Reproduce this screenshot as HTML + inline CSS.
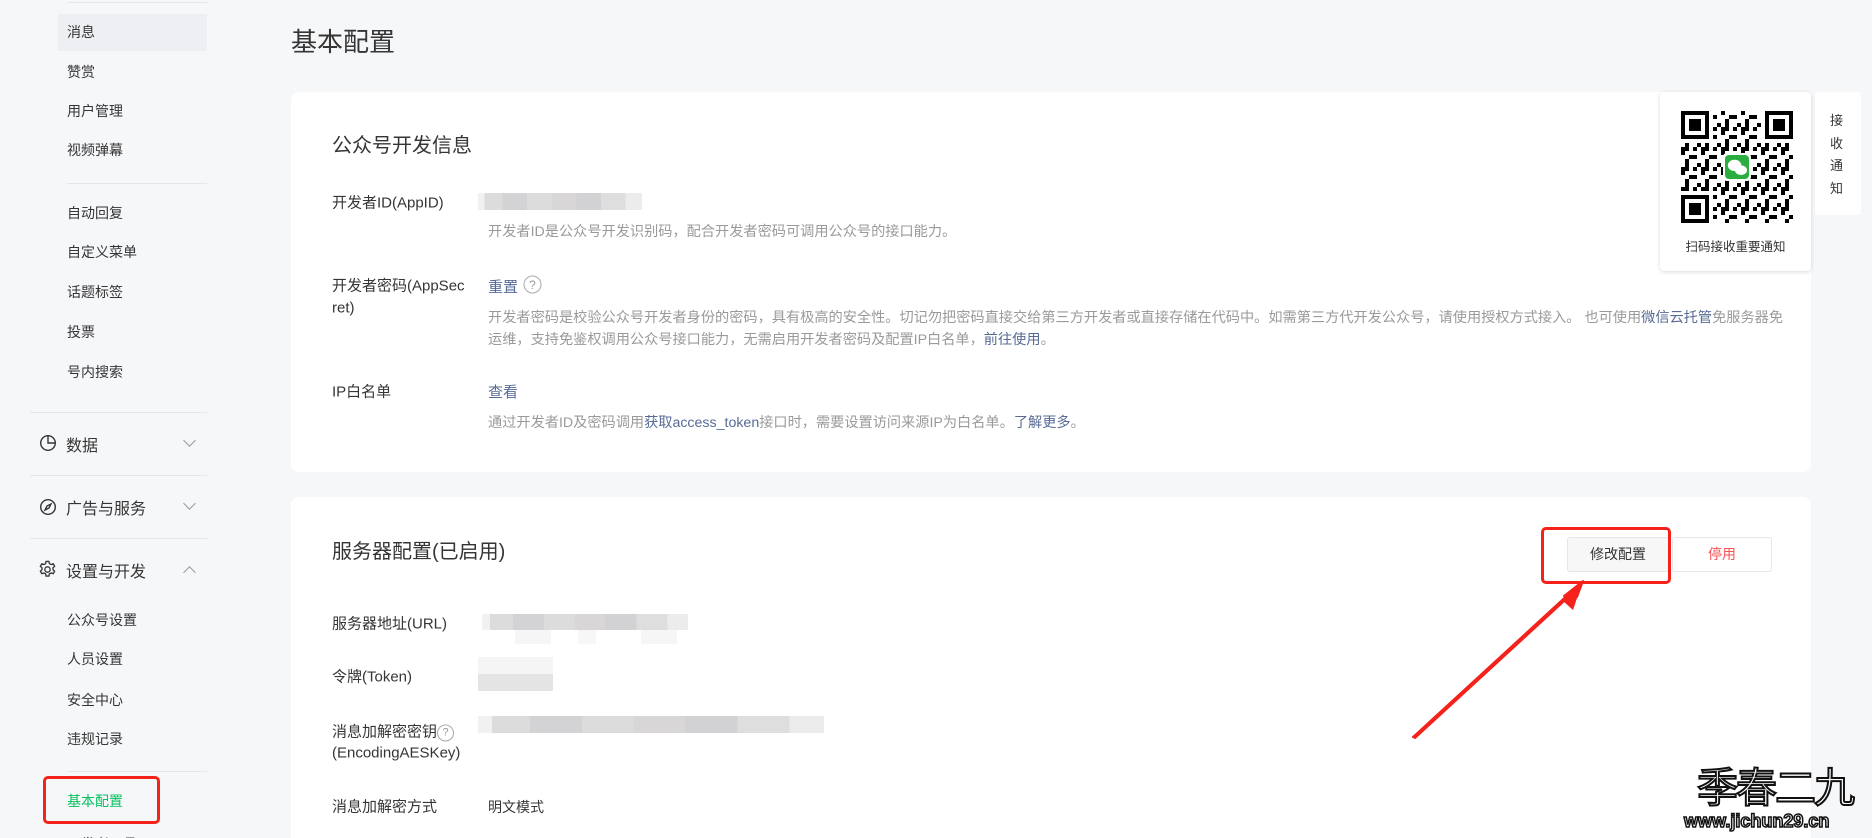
<!DOCTYPE html>
<html style="width:1872px;height:838px;overflow:hidden"><head><meta charset="utf-8">
<style>
*{margin:0;padding:0;box-sizing:border-box}
body{width:1872px;height:838px;overflow:hidden;background:#f6f7f9;font-family:"Liberation Sans","Noto Sans CJK SC",sans-serif;color:#353535;position:relative}
.a{position:absolute;white-space:nowrap}
.si{position:absolute;left:67px;font-size:14px;color:#353535;transform:translateY(-50%)}
.hd{position:absolute;left:48px;font-size:16px;color:#353535;transform:translateY(-50%)}
.dv{position:absolute;height:1px;background:#e4e6eb}
.card{position:absolute;background:#fff;border-radius:8px}
.lb{position:absolute;left:332px;font-size:15px;color:#353535;transform:translateY(-50%)}
.ds{position:absolute;left:488px;font-size:14.2px;color:#9a9a9a;transform:translateY(-50%)}
.lk{color:#576b95}
.blur{position:absolute;background:linear-gradient(90deg,#f1f1f1 0 4%,#dcdcdc 4% 15%,#d3d3d6 15% 30%,#dcdcdc 30% 45%,#d8d6d6 45% 60%,#d2d2d4 60% 75%,#dedede 75% 90%,#ececec 90%)}
.chev{position:absolute;width:9px;height:9px;border-right:1.5px solid #9a9a9a;border-bottom:1.5px solid #9a9a9a}
</style></head><body>

<!-- sidebar -->
<div class="dv" style="left:67px;top:2px;width:140px"></div>
<div class="a" style="left:58px;top:14px;width:149px;height:37px;background:#eeeff2"></div>
<div class="si" style="top:32px">消息</div>
<div class="si" style="top:72px">赞赏</div>
<div class="si" style="top:111px">用户管理</div>
<div class="si" style="top:150px">视频弹幕</div>
<div class="dv" style="left:67px;top:183px;width:140px"></div>
<div class="si" style="top:213px">自动回复</div>
<div class="si" style="top:252px">自定义菜单</div>
<div class="si" style="top:292px">话题标签</div>
<div class="si" style="top:332px">投票</div>
<div class="si" style="top:372px">号内搜索</div>
<div class="dv" style="left:30px;top:412px;width:177px"></div>

<svg class="a" style="left:39px;top:434px" width="18" height="18" viewBox="0 0 18 18" fill="none" stroke="#353535" stroke-width="1.4"><circle cx="9" cy="9" r="7.3"/><path d="M9 1.7V9H16.3"/></svg>
<div class="hd" style="left:66px;top:444px">数据</div>
<div class="chev" style="left:185px;top:436px;transform:rotate(45deg)"></div>
<div class="dv" style="left:30px;top:475px;width:177px"></div>

<svg class="a" style="left:39px;top:498px" width="18" height="18" viewBox="0 0 18 18" fill="none" stroke="#353535" stroke-width="1.4"><circle cx="9" cy="9" r="7.3"/><path d="M12 6L8 8 6 12 10 10z"/></svg>
<div class="hd" style="left:66px;top:507px">广告与服务</div>
<div class="chev" style="left:185px;top:499px;transform:rotate(45deg)"></div>
<div class="dv" style="left:30px;top:538px;width:177px"></div>

<svg class="a" style="left:38px;top:560px" width="19" height="19" viewBox="0 0 20 20" fill="none" stroke="#353535" stroke-width="1.4"><path d="M8.5 1.5h3l.5 2.3 1.8 1 2.2-.8 1.5 2.6-1.7 1.6v2l1.7 1.6-1.5 2.6-2.2-.8-1.8 1-.5 2.3h-3l-.5-2.3-1.8-1-2.2.8-1.5-2.6 1.7-1.6v-2L2.5 6.6 4 4l2.2.8 1.8-1z"/><circle cx="10" cy="10" r="2.8"/></svg>
<div class="hd" style="left:66px;top:570px">设置与开发</div>
<div class="chev" style="left:185px;top:568px;transform:rotate(225deg)"></div>

<div class="si" style="top:620px">公众号设置</div>
<div class="si" style="top:659px">人员设置</div>
<div class="si" style="top:700px">安全中心</div>
<div class="si" style="top:739px">违规记录</div>
<div class="dv" style="left:67px;top:771px;width:140px"></div>
<div class="si" style="top:801px;color:#07c160">基本配置</div>
<div class="a" style="left:43px;top:776px;width:117px;height:48px;border:3px solid #f5221b;border-radius:5px"></div>
<div class="a" style="left:67px;top:834px;font-size:14px;color:#353535;height:4px;overflow:hidden;line-height:20px">开发者工具</div>

<!-- title -->
<div class="a" style="left:291px;top:22px;font-size:26px;color:#353535">基本配置</div>

<!-- card 1 -->
<div class="card" style="left:291px;top:92px;width:1520px;height:380px"></div>
<div class="a" style="left:332px;top:129px;font-size:20px;color:#353535">公众号开发信息</div>
<div class="lb" style="top:202px">开发者ID(AppID)</div>
<div class="blur" style="left:478px;top:193px;width:164px;height:17px"></div>
<div class="ds" style="top:231px">开发者ID是公众号开发识别码，配合开发者密码可调用公众号的接口能力。</div>
<div class="lb" style="top:285px">开发者密码(AppSec</div>
<div class="lb" style="top:308px">ret)</div>
<div class="a lk" style="left:488px;top:276px;font-size:15px">重置</div>
<svg class="a" style="left:523px;top:275px" width="19" height="19" viewBox="0 0 19 19"><circle cx="9.5" cy="9.5" r="8.5" fill="none" stroke="#aaa" stroke-width="1"/><text x="9.5" y="14" font-size="12" text-anchor="middle" fill="#999" font-family="Liberation Sans">?</text></svg>
<div class="ds" style="top:317px">开发者密码是校验公众号开发者身份的密码，具有极高的安全性。切记勿把密码直接交给第三方开发者或直接存储在代码中。如需第三方代开发公众号，请使用授权方式接入。 也可使用<span class="lk">微信云托管</span>免服务器免</div>
<div class="ds" style="top:339px">运维，支持免鉴权调用公众号接口能力，无需启用开发者密码及配置IP白名单，<span class="lk">前往使用</span>。</div>
<div class="lb" style="top:391px">IP白名单</div>
<div class="a lk" style="left:488px;top:381px;font-size:15px">查看</div>
<div class="ds" style="top:422px">通过开发者ID及密码调用<span class="lk">获取access_token</span>接口时，需要设置访问来源IP为白名单。<span class="lk">了解更多</span>。</div>

<!-- card 2 -->
<div class="card" style="left:291px;top:497px;width:1520px;height:341px;border-radius:8px 8px 0 0"></div>
<div class="a" style="left:332px;top:535px;font-size:20px;color:#353535">服务器配置(已启用)</div>
<div class="a" style="left:1567px;top:537px;width:102px;height:35px;border:1px solid #e4e6eb;background:#f7f7f7;border-radius:3px;font-size:14px;text-align:center;line-height:33px;color:#353535">修改配置</div>
<div class="a" style="left:1672px;top:537px;width:100px;height:35px;border:1px solid #e4e6eb;background:#fff;border-radius:3px;font-size:14px;text-align:center;line-height:33px;color:#fa5151">停用</div>
<div class="a" style="left:1541px;top:527px;width:130px;height:57px;border:3px solid #f5221b;border-radius:5px"></div>
<svg class="a" style="left:0;top:0" width="1872" height="838"><polygon points="1413,737 1573,590 1564,596 1583,581 1577,597 1574,592 1415,738" fill="#f5221b" stroke="#f5221b" stroke-width="2" stroke-linejoin="round"/><polygon points="1563,601 1583,580 1573,610" fill="#f5221b"/></svg>

<div class="lb" style="top:623px">服务器地址(URL)</div>
<div class="blur" style="left:482px;top:614px;width:206px;height:16px"></div>
<div class="a" style="left:497px;top:630px;width:180px;height:14px;background:linear-gradient(90deg,#fff 0 10%,#f6f6f6 10% 30%,#fff 30% 45%,#f7f7f7 45% 55%,#fff 55% 80%,#f6f6f6 80%)"></div>
<div class="lb" style="top:676px">令牌(Token)</div>
<div class="a" style="left:478px;top:657px;width:75px;height:34px;background:linear-gradient(180deg,#f5f5f5 0 50%,#e4e4e4 50%)"></div>
<div class="lb" style="top:731px">消息加解密密钥<span style="display:inline-block;width:17px;height:17px;border:1px solid #aaa;border-radius:50%;font-size:11px;line-height:15px;text-align:center;color:#999;vertical-align:middle">?</span></div>
<div class="lb" style="top:753px">(EncodingAESKey)</div>
<div class="blur" style="left:478px;top:716px;width:346px;height:17px"></div>
<div class="lb" style="top:806px">消息加解密方式</div>
<div class="a" style="left:488px;top:797px;font-size:14px;color:#353535">明文模式</div>

<!-- QR popup -->
<div class="a" style="left:1660px;top:92px;width:151px;height:179px;background:#fff;border-radius:4px;box-shadow:0 1px 4px rgba(0,0,0,.15)"></div>
<svg class="a" style="left:1681px;top:111px" width="112" height="112" viewBox="0 0 28 28">
<defs><pattern id="q" width="5" height="5" patternUnits="userSpaceOnUse"><rect width="1" height="1" x="0" y="0"/><rect width="2" height="1" x="2" y="1"/><rect width="1" height="2" x="1" y="2"/><rect width="1" height="1" x="4" y="3"/><rect width="2" height="1" x="0" y="4"/><rect width="1" height="1" x="3" y="4"/></pattern></defs>
<rect width="28" height="28" fill="url(#q)"/>
<g fill="#fff"><rect width="8" height="8"/><rect x="20" width="8" height="8"/><rect y="20" width="8" height="8"/></g>
<g fill="none" stroke="#000"><rect x=".5" y=".5" width="6" height="6"/><rect x="21.5" y=".5" width="6" height="6"/><rect x=".5" y="21.5" width="6" height="6"/></g>
<rect x="2" y="2" width="3" height="3"/><rect x="23" y="2" width="3" height="3"/><rect x="2" y="23" width="3" height="3"/>
<rect x="10.5" y="10.5" width="7" height="7" rx="1" fill="#fff"/><rect x="11" y="11" width="6" height="6" rx="1" fill="#2aae40"/>
<ellipse cx="13.4" cy="13.6" rx="1.7" ry="1.4" fill="#fff"/><ellipse cx="15" cy="14.8" rx="1.5" ry="1.2" fill="#fff"/>
</svg>
<div class="a" style="left:1660px;top:236px;width:151px;text-align:center;font-size:12.5px;color:#353535">扫码接收重要通知</div>
<div class="a" style="left:1815px;top:92px;width:46px;height:123px;background:#fff;border-radius:3px"></div>
<div class="a" style="left:1830px;top:110px;font-size:13px;line-height:22.5px;color:#353535;white-space:normal;width:14px">接收通知</div>

<!-- watermark -->
<div class="a" style="left:1697px;top:760px;font-size:41px;font-family:'Noto Sans CJK SC',sans-serif;color:#fff;-webkit-text-stroke:2px #111;letter-spacing:-2px;line-height:48px">季春二九</div>
<div class="a" style="left:1684px;top:809px;font-size:18px;font-weight:bold;color:#fff;-webkit-text-stroke:1.5px #111;line-height:24px">www.jichun29.cn</div>
</body></html>
